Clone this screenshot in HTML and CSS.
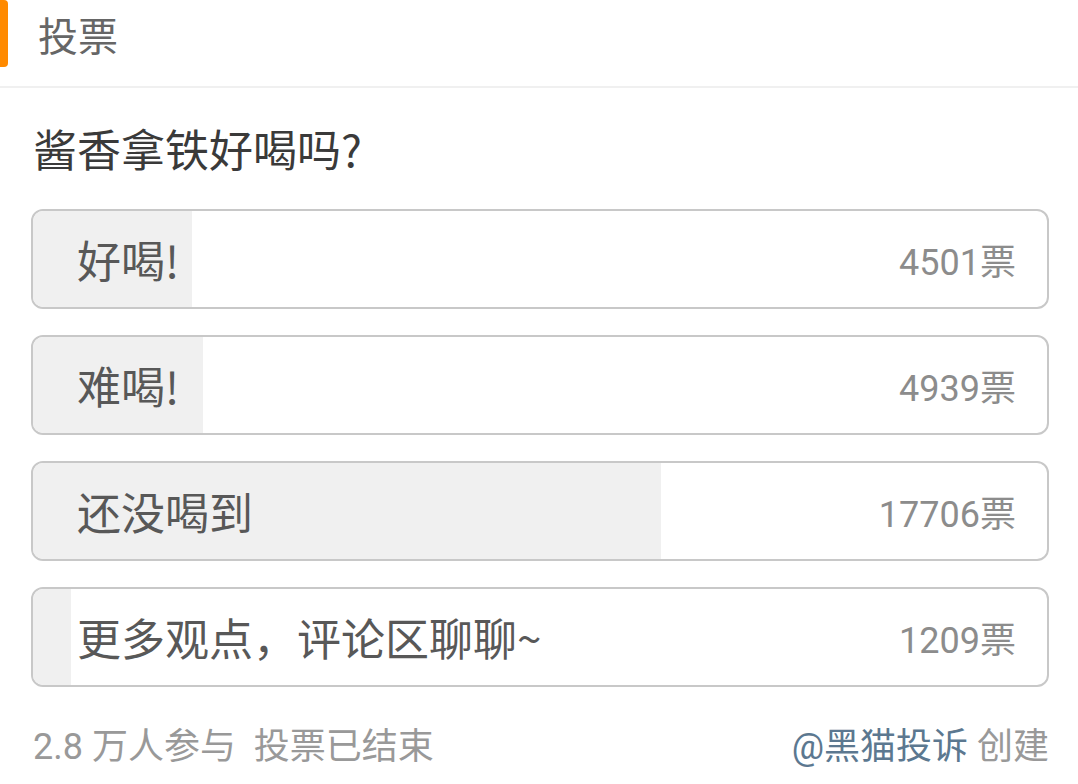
FILE: index.html
```html
<!DOCTYPE html>
<html lang="zh-CN">
<head>
<meta charset="utf-8">
<title>投票</title>
<link rel="stylesheet" href="styles.css">
</head>
<body>
<header class="head">
  <span class="head-mark"></span>
  <span class="head-title">投票</span>
</header>
<main class="poll">
  <h1 class="question">酱香拿铁好喝吗?</h1>
  <ul class="options">
    <li class="option">
      <span class="fill" style="width:15.7%"></span>
      <span class="label">好喝!</span>
      <span class="count">4501票</span>
    </li>
    <li class="option">
      <span class="fill" style="width:16.8%"></span>
      <span class="label">难喝!</span>
      <span class="count">4939票</span>
    </li>
    <li class="option">
      <span class="fill" style="width:61.9%"></span>
      <span class="label">还没喝到</span>
      <span class="count">17706票</span>
    </li>
    <li class="option">
      <span class="fill" style="width:3.7%"></span>
      <span class="label">更多观点，评论区聊聊~</span>
      <span class="count">1209票</span>
    </li>
  </ul>
  <footer class="foot">
    <span class="foot-left">2.8 万人参与&nbsp;&nbsp;投票已结束</span>
    <span class="foot-right"><span class="author">@黑猫投诉</span> 创建</span>
  </footer>
</main>
</body>
</html>
```
FILE: styles.css
```css
* { box-sizing: border-box; }
html, body { margin: 0; padding: 0; background: #fff; }
body {
  font-family: "Noto Sans CJK SC", "Noto Sans", sans-serif;
  color: #333;
}
.head {
  display: flex;
  align-items: center;
  height: 67px;
  margin-bottom: 19px;
}
.head-mark {
  width: 8px;
  height: 67px;
  background: #ff8a00;
  border-radius: 0 4px 4px 0;
}
.head-title {
  margin-left: 30px;
  font-size: 40px;
  line-height: 1;
  color: #666;
}
.poll {
  border-top: 2px solid #f0f0f0;
  padding: 0 29px 0 31px;
}
.question {
  margin: 30px 0 0 2px;
  font-size: 44px;
  font-weight: normal;
  line-height: 60px;
  color: #3a3a3a;
}
.options {
  list-style: none;
  margin: 31px 0 0 0;
  padding: 0;
  display: flex;
  flex-direction: column;
  gap: 26px;
}
.option {
  position: relative;
  height: 100px;
  border: 2px solid #c8c8c8;
  border-radius: 12px;
  overflow: hidden;
  display: flex;
  align-items: center;
  justify-content: space-between;
  padding: 0 31px 0 44px;
}
.fill {
  position: absolute;
  left: 0;
  top: 0;
  bottom: 0;
  background: #f0f0f0;
}
.label {
  position: relative;
  font-size: 44px;
  color: #585858;
  line-height: 1;
}
.count {
  position: relative;
  margin-top: 8px;
  font-family: Roboto, "Noto Sans CJK SC", sans-serif;
  font-size: 36px;
  color: #8c8c8c;
  line-height: 1;
}
.foot {
  display: flex;
  justify-content: space-between;
  align-items: center;
  margin-top: 31px;
  height: 50px;
  font-family: Roboto, "Noto Sans CJK SC", sans-serif;
  font-size: 36px;
  color: #999;
  margin-left: 2px;
}
.author { color: #5c7890; }
```
